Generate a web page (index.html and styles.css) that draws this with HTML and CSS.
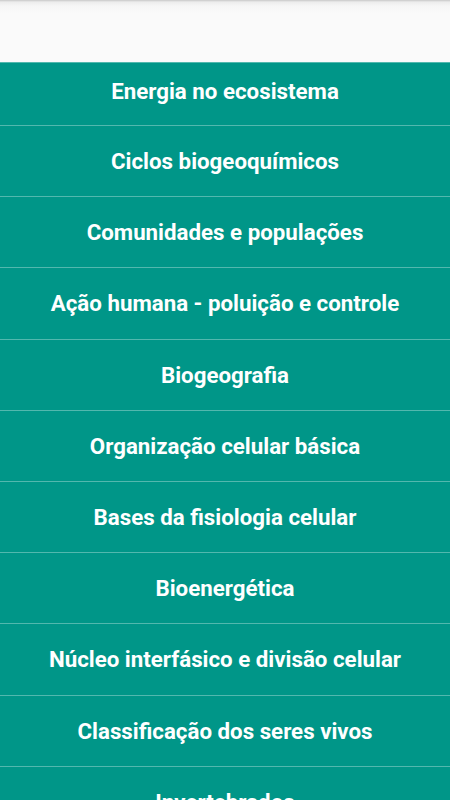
FILE: index.html
```html
<!DOCTYPE html>
<html>
<head>
  <meta charset="utf-8">
  <meta name="viewport" content="width=device-width">
  <title>Biologia</title>
  <link rel="stylesheet" href="styles.css">
</head>
<body>
  <div id="header"></div>
  <ul id="list">
    <li class="item first">Energia no ecosistema</li>
    <li class="item">Ciclos biogeoquímicos</li>
    <li class="item">Comunidades e populações</li>
    <li class="item">Ação humana - poluição e controle</li>
    <li class="item">Biogeografia</li>
    <li class="item">Organização celular básica</li>
    <li class="item">Bases da fisiologia celular</li>
    <li class="item">Bioenergética</li>
    <li class="item">Núcleo interfásico e divisão celular</li>
    <li class="item">Classificação dos seres vivos</li>
    <li class="item">Invertebrados</li>
  </ul>
</body>
</html>
```

FILE: styles.css
```css
*{
  padding: 0;
  margin: 0;
}
html, body{
  height: 100%;
  overflow: hidden;
}
body{
  font-family: Roboto, "Noto Sans", sans-serif;
  background-color: #009688;
}
#header{
  height: 62px;
  background: linear-gradient(#c8c8c8 0, #ececec 2px, #f6f6f6 6px, #fafafa 14px);
}
#list{
  list-style: none;
}
.item{
  height: 70.2px;
  line-height: 70px;
  border-top: 1px solid #52b8ae;
  text-align: center;
  color: #fff;
  font-size: 22.3px;
  font-weight: bold;
  white-space: nowrap;
}
.item.first{
  height: 62px;
  line-height: 56px;
}
```
